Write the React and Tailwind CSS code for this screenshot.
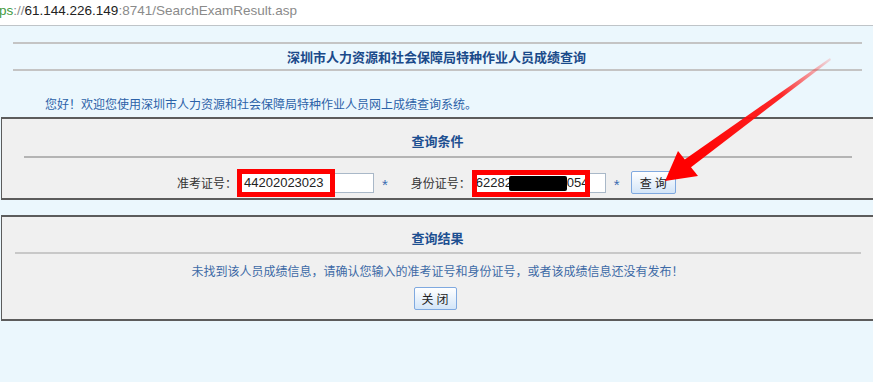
import React from 'react';

const cjk = { fontFamily: '"Noto Sans CJK SC", "Liberation Sans", sans-serif' };
const latin = { fontFamily: '"Liberation Sans", sans-serif' };

const RedArrow = () => (
  <svg className="absolute left-0 top-0 pointer-events-none" width="873" height="382" viewBox="0 0 873 382">
    <defs>
      <linearGradient id="tail" x1="830" y1="58" x2="690" y2="163" gradientUnits="userSpaceOnUse">
        <stop offset="0" stopColor="#ff3030" stopOpacity="0.15" />
        <stop offset="0.35" stopColor="#ff1010" stopOpacity="0.9" />
        <stop offset="1" stopColor="#ff0000" />
      </linearGradient>
    </defs>
    <polygon points="830,58 831,60 690,168 684,160" fill="url(#tail)" />
    <polygon points="665,181 678,151 698,176" fill="#ff0000" />
  </svg>
);

const Field = ({ value, tail, redLeft, redTop, redW, redH, masked }) => (
  <div className="relative">
    <div className="w-[133px] h-[20px] bg-white border border-[#a9b8c8] flex items-center pl-[2px] text-[13px] text-[#222]" style={latin}>
      {value}
    </div>
    {masked && <div className="absolute left-[36px] top-[3px] w-[58px] h-[15px] bg-black rounded-[2px]" />}
    {tail && (
      <span className="absolute left-[94px] top-0 h-[20px] flex items-center text-[13px] text-[#222]" style={latin}>
        {tail}
      </span>
    )}
    <div
      className="absolute border-[5px] border-[#ff0000]"
      style={{ left: redLeft, top: redTop, width: redW, height: redH }}
    />
  </div>
);

const Btn = ({ children, w, h }) => (
  <button
    className="border border-[#7fa9e0] rounded-[2px] bg-gradient-to-b from-white to-[#d3e5f8] text-[12px] text-[#222] flex items-center justify-center tracking-[3px] pl-[3px]"
    style={{ width: w, height: h, ...cjk }}
  >
    {children}
  </button>
);

export default function App() {
  return (
    <div className="relative w-[873px] h-[382px] overflow-hidden bg-[#ebf7fd]" style={cjk}>
      <div className="h-[26px] bg-white border-b border-[#bfc4c8] flex items-center pb-[3px] -ml-[1px] text-[13.5px]" style={latin}>
        <span className="text-[#3e9a3e]">ps</span>
        <span className="text-[#8a8a8a]">://</span>
        <span className="text-[#222]">61.144.226.149</span>
        <span className="text-[#8a8a8a]">:8741/SearchExamResult.asp</span>
      </div>

      <div className="mt-[16px] ml-[13px] w-[849px] h-[2px] bg-[#c4c4c4]" />
      <div className="h-[25px] flex items-center justify-center text-[13px] font-bold text-[#1a4a8a] leading-[16px]">
        深圳市人力资源和社会保障局特种作业人员成绩查询
      </div>
      <div className="ml-[13px] w-[849px] h-[2px] bg-[#c4c4c4]" />

      <div className="mt-[25px] ml-[45px] text-[12px] leading-[16px] text-[#2b62a8]">
        您好！欢迎您使用深圳市人力资源和社会保障局特种作业人员网上成绩查询系统。
      </div>

      <div className="mt-[5px] ml-px w-[880px] border-y-2 border-l border-[#5c5c5c] bg-[#f0f0f0] pt-[14px] pb-[4px]">
        <div className="text-center pr-[8px] text-[13px] leading-[16px] font-bold text-[#1d4f91]">查询条件</div>
        <div className="mt-[7px] ml-[22px] w-[828px] h-[2px] bg-[#b4b4b4]" />
        <div className="mt-[13px] h-[23px] flex items-center pl-[175px] text-[12px] text-[#333]">
          <span className="w-[64px]">准考证号：</span>
          <Field value="44202023023" redLeft={-4} redTop={-4} redW={98} redH={28} />
          <span className="ml-[8px] text-[15px] leading-[15px] pt-[4px] text-[#3a6cb0]" style={latin}>*</span>
          <span className="ml-[23px] w-[62px]">身份证号：</span>
          <Field value="62282" tail="054" masked redLeft={-1} redTop={-3} redW={118} redH={27} />
          <span className="ml-[8px] text-[15px] leading-[15px] pt-[4px] text-[#3a6cb0]" style={latin}>*</span>
          <div className="ml-[11px]">
            <Btn w={45} h={23}>查询</Btn>
          </div>
        </div>
      </div>

      <div className="mt-[15px] ml-px w-[880px] border-y-2 border-l border-[#5c5c5c] bg-[#f0f0f0] pt-[13px] pb-[9px]">
        <div className="text-center pr-[8px] text-[13px] leading-[16px] font-bold text-[#1d4f91]">查询结果</div>
        <div className="mt-[6px] ml-[13px] w-[846px] h-[2px] bg-[#c8c8c8]" />
        <div className="mt-[9px] text-center pr-[8px] text-[12px] leading-[16px] text-[#3d6aa6]">
          未找到该人员成绩信息，请确认您输入的准考证号和身份证号，或者该成绩信息还没有发布！
        </div>
        <div className="mt-[8px] flex justify-center pr-[13px]">
          <Btn w={43} h={23}>关闭</Btn>
        </div>
      </div>

      <RedArrow />
    </div>
  );
}
